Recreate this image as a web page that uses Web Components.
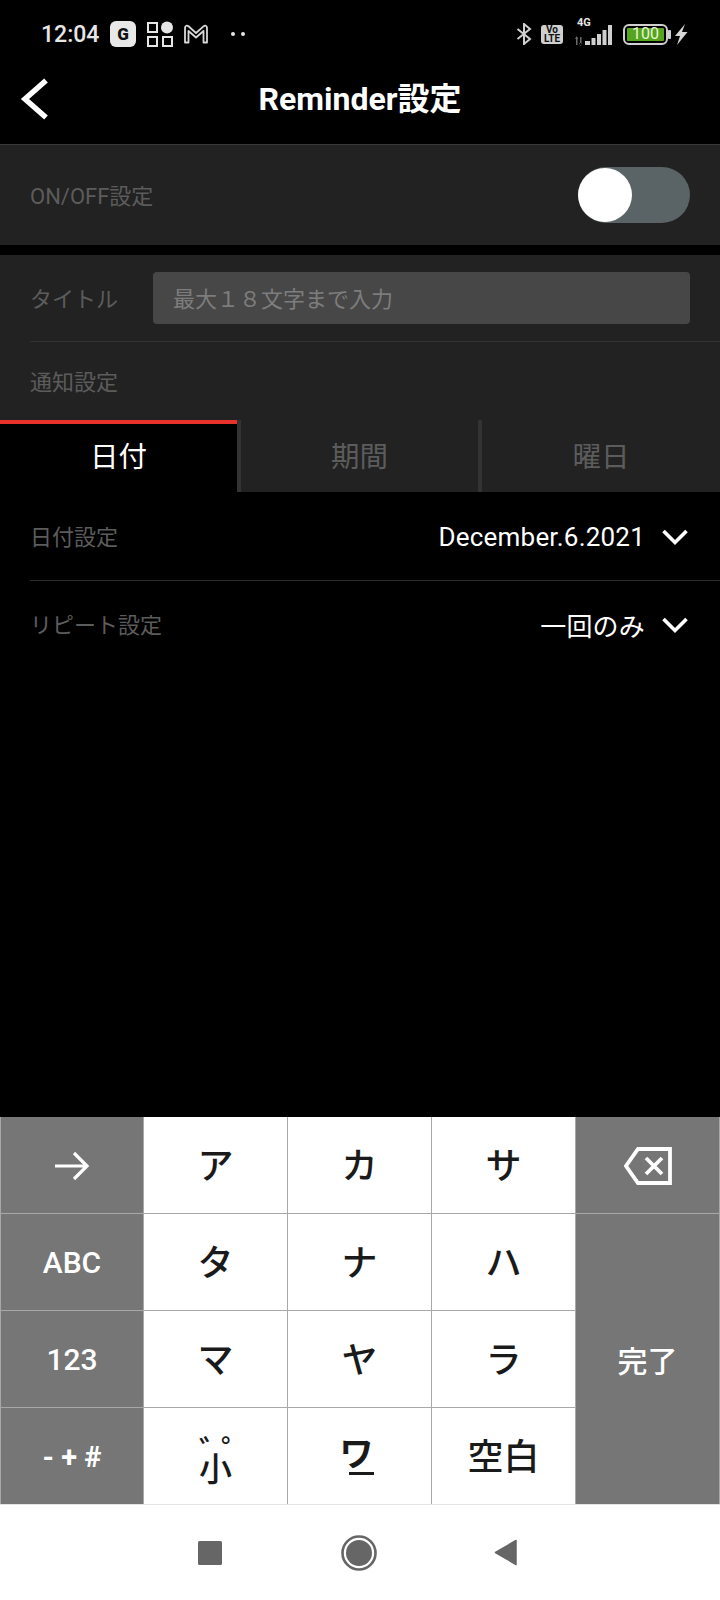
<!DOCTYPE html>
<html>
<head>
<meta charset="utf-8">
<title>Reminder設定</title>
<style>
  html, body { margin: 0; padding: 0; background: #000; }
  body { font-family: Roboto, "Noto Sans CJK JP", sans-serif; }
  reminder-app { height: 1600px; }
</style>
</head>
<body>
<reminder-app></reminder-app>
<script>
(function (document, window) {

  function define(name, css, html) {
    window.customElements.define(name, class extends HTMLElement {
      constructor() {
        super();
        this._root = this.attachShadow({ mode: 'open' });
      }
      connectedCallback() {
        const label = this.getAttribute('label') || '';
        const value = this.getAttribute('value') || '';
        this._root.innerHTML = '<style>' + css + '</style>' +
          html.replace(/\{label\}/g, label).replace(/\{value\}/g, value);
      }
    });
  }

  const chevron = '<svg width="28" height="18" viewBox="0 0 28 18"><path d="M2.5 3L14 14.5 25.500 3" fill="none" stroke="#fff" stroke-width="3.600"/></svg>';

  define('status-bar', `
    :host { display: block; height: 72px; position: relative; color: #e6e6e6; font-family: Roboto, sans-serif; }
    .row { display: flex; align-items: center; height: 68px; padding: 0 32px 0 41px; }
    .time { font-size: 23px; font-weight: 500; width: 69px; }
    .g { width: 26px; height: 26px; background: #e8e8e8; border-radius: 6px; color: #111; font-size: 17px; font-weight: 900; display: flex; align-items: center; justify-content: center; }
    svg { display: block; flex: none; }
    .grow { flex: 1; }
    .volte { width: 22px; height: 19px; margin-left: 9px; background: #cfcfcf; border-radius: 3px; color: #111; font-size: 10px; line-height: 9.500px; font-weight: 700; text-align: center; }
    .volte span { display: block; }
    .net { position: relative; width: 38px; height: 24px; margin-left: 12px; }
    .net b { position: absolute; left: 2px; top: -5px; font-size: 11px; line-height: 11px; font-weight: 700; }
    .batt { position: relative; width: 45px; height: 21px; margin-left: 10px; box-sizing: border-box; border: 2.500px solid #d0d0d0; border-radius: 6px; padding: 2px; }
    .batt div { height: 100%; background: #55a51f; border-radius: 1px; color: #e8f5dc; font-size: 16px; line-height: 12px; text-align: center; }
  `, `
    <div class="row">
      <span class="time">12:04</span>
      <span class="g">G</span>
      <svg style="margin-left:11px" width="26" height="26" viewBox="0 0 26 26" fill="none" stroke="#e6e6e6" stroke-width="2">
        <rect x="1" y="2" width="9" height="9"/><rect x="1" y="16" width="9" height="9"/><rect x="16" y="16" width="9" height="9"/>
        <circle cx="20" cy="6.500" r="6" fill="#e6e6e6" stroke="none"/>
      </svg>
      <svg style="margin-left:10px" width="26" height="22" viewBox="0 0 26 22" fill="none" stroke="#d8d8d8" stroke-width="1.800" stroke-linejoin="round">
        <path d="M2 19.500V5C2 2.500 4 2 5.500 3.300L13 10 20.500 3.300C22 2 24 2.500 24 5V19.500H20.500V8L13 14.500 5.500 8V19.500Z"/>
      </svg>
      <svg style="margin-left:21px" width="16" height="6" viewBox="0 0 16 6" fill="#e6e6e6"><circle cx="3" cy="3" r="2"/><circle cx="13" cy="3" r="2"/></svg>
      <span class="grow"></span>
      <svg width="16" height="22" viewBox="0 0 16 22" fill="none" stroke="#d0d0d0" stroke-width="2"><path d="M1.500 6L14 16 8 21V1L14 6 1.500 16"/></svg>
      <div class="volte"><span>Vo</span><span>LTE</span></div>
      <div class="net">
        <b>4G</b>
        <svg style="position:absolute;left:0;top:3px" width="38" height="21" viewBox="0 0 38 21" fill="#cfcfcf">
          <path d="M1 12h1.500v8H1zM0 14l1.700-3 1.700 3zM5 12h1.500v8H5zM4 18l1.700 3 1.700-3z" fill="#6a6a6a"/>
          <rect x="10" y="16" width="5" height="4"/><rect x="16.500" y="13" width="4" height="7"/><rect x="22" y="9" width="4" height="11"/><rect x="27.500" y="5" width="4" height="15"/><rect x="33" y="0" width="4" height="20"/>
        </svg>
      </div>
      <div class="batt"><div>100</div></div>
      <svg width="4" height="9" viewBox="0 0 4 9" fill="#d0d0d0"><rect width="3" height="9" rx="1"/></svg>
      <svg style="margin-left:2px" width="14" height="21" viewBox="0 0 14 21" fill="#d8d8d8"><path d="M11 0L1 12h5L3 21 13.500 8H8z"/></svg>
    </div>
  `);

  define('app-header', `
    :host { display: flex; align-items: flex-start; justify-content: center; height: 72px; position: relative; color: #fff; font-size: 32px; font-weight: 700; }
    svg { position: absolute; left: 19px; top: 5px; }
    span { margin-top: 7px; line-height: 40px; }
  `, `
    <svg width="30" height="44" viewBox="0 0 30 44"><path d="M27 3.500L6 22 27 40.500" fill="none" stroke="#fff" stroke-width="5.500"/></svg>
    <span><slot></slot></span>
  `);

  define('switch-row', `
    :host { display: flex; align-items: center; justify-content: space-between; height: 101px; box-sizing: border-box; border-top: 1px solid #3a3a3a; padding: 0 30px; background: #222; color: #5c5c5c; font-size: 22px; }
    span { padding-bottom: 2px; }
    .track { position: relative; width: 112px; height: 56px; border-radius: 28px; background: #5a6366; }
    .knob { position: absolute; left: 0; top: 1px; width: 54px; height: 54px; border-radius: 50%; background: #fff; }
  `, `
    <span>{label}</span>
    <div class="track"><div class="knob"></div></div>
  `);

  define('title-row', `
    :host { display: flex; align-items: center; height: 87px; box-sizing: border-box; margin-left: 30px; padding-right: 30px; padding-bottom: 1px; border-bottom: 1px solid #333; color: #5c5c5c; font-size: 22px; }
    .label { width: 123px; padding-bottom: 2px; }
    .input { flex: 1; height: 52px; display: flex; align-items: center; padding: 0 0 2px 20px; box-sizing: border-box; border-radius: 4px; background: #474747; color: #7d7d7d; }
  `, `
    <span class="label">{label}</span>
    <div class="input">{value}</div>
  `);

  define('notice-head', `
    :host { display: flex; align-items: center; height: 78px; padding-left: 30px; padding-bottom: 2px; box-sizing: border-box; color: #5c5c5c; font-size: 22px; }
  `, `<slot></slot>`);

  define('tab-bar', `
    :host { display: flex; height: 72px; background: #222; }
    ::slotted(tab-item) { flex: none; }
  `, `<slot></slot>`);

  define('tab-item', `
    :host { display: flex; align-items: center; justify-content: center; box-sizing: border-box; font-size: 28.500px; color: #5c5c5c; width: 241px; height: 72px; border-right: 4px solid #333; padding-bottom: 3px; }
    :host([active]) { background: #000; color: #fff; box-shadow: inset 0 4px 0 #e8312a; }
    :host([last]) { width: 238px; border-right: 0; }
  `, `<slot></slot>`);

  define('select-row', `
    :host { display: flex; align-items: center; height: 89px; box-sizing: border-box; margin-left: 30px; padding-right: 31px; color: #5c5c5c; font-size: 22px; border-bottom: 1px solid #2c2c2c; }
    :host([plain]) { border-bottom: 0; height: 86px; }
    .label { padding-bottom: 2px; }
    .value { margin-left: auto; color: #fff; font-size: 26px; letter-spacing: .2px; padding-top: 1px; }
    svg { margin: 2px 0 0 16px; display: block; }
  `, `
    <span class="label">{label}</span>
    <span class="value">{value}</span>
    ${chevron}
  `);

  define('ime-key', `
    :host { display: flex; align-items: center; justify-content: center; position: relative; background: #fff; color: #1a1a1a; font-size: 36px; font-weight: 500; font-family: "Noto Sans CJK JP", sans-serif; padding-bottom: 4px; box-sizing: border-box; }
    :host([fn]) { background: #767676; color: #fff; font-size: 30px; font-weight: 500; font-family: Roboto, "Noto Sans CJK JP", sans-serif; padding-bottom: 0; }
  `, `<slot></slot>`);

  define('ime-keyboard', `
    :host { display: grid; grid-template-columns: 142px repeat(4, 143px); grid-template-rows: repeat(4, 96px); gap: 1px; padding: 0 1px; background: #a8a8a8; }
    ::slotted(.tall) { grid-column: 5; grid-row: 2 / span 3; }
  `, `<slot></slot>`);

  define('nav-bar', `
    :host { display: block; height: 96px; box-sizing: border-box; position: relative; background: #fff; border-top: 1px solid #e4e4e4; }
    svg { position: absolute; display: block; }
  `, `
    <svg style="left:198px;top:36px" width="24" height="24" viewBox="0 0 24 24"><rect width="24" height="24" rx="1.500" fill="#666"/></svg>
    <svg style="left:341px;top:30px" width="36" height="36" viewBox="0 0 36 36"><circle cx="18" cy="18" r="16.500" fill="none" stroke="#666" stroke-width="2.600"/><circle cx="18" cy="18" r="13" fill="#666"/></svg>
    <svg style="left:494px;top:34px" width="24" height="27" viewBox="0 0 24 27"><path d="M22 1.500L1.500 13.500 22 25.500Z" fill="#666" stroke="#666" stroke-width="1.500" stroke-linejoin="round"/></svg>
  `);

  define('reminder-app', `
    :host { display: flex; flex-direction: column; background: #000; font-family: Roboto, "Noto Sans CJK JP", sans-serif; }
    .form { margin-top: 10px; background: #222; }
    .spacer { flex: 1; }
    /* marks and 小 stay one text node: first line is ゛゜, squeezed together */
    .mark { display: block; width: 33px; white-space: pre; font-size: 33px; line-height: 17px; margin-top: 10px; }
    .mark::first-line { letter-spacing: -11px; }
    .wa { display: inline-block; line-height: 32px; font-size: 34px; font-weight: 700; position: relative; margin: -5px 6px 0 0; }
    .wa::after { content: ""; position: absolute; left: 9px; right: 0; bottom: -7px; height: 3px; background: #1a1a1a; }
    .sym { font-size: 29px; font-weight: 700; margin-top: 2px; }
    svg { display: block; margin-top: 1px; }
  `, `
    <status-bar></status-bar>
    <app-header>Reminder設定</app-header>
    <switch-row label="ON/OFF設定"></switch-row>
    <div class="form">
      <title-row label="タイトル" value="最大１８文字まで入力"></title-row>
      <notice-head>通知設定</notice-head>
      <tab-bar>
        <tab-item active>日付</tab-item>
        <tab-item>期間</tab-item>
        <tab-item last>曜日</tab-item>
      </tab-bar>
    </div>
    <select-row label="日付設定" value="December.6.2021"></select-row>
    <select-row plain label="リピート設定" value="一回のみ"></select-row>
    <div class="spacer"></div>
    <ime-keyboard>
      <ime-key fn><svg width="36" height="30" viewBox="0 0 36 30"><path d="M1 15H33M20 2L33 15 20 28" fill="none" stroke="#fff" stroke-width="3.200"/></svg></ime-key>
      <ime-key>ア</ime-key>
      <ime-key>カ</ime-key>
      <ime-key>サ</ime-key>
      <ime-key fn><svg width="48" height="38" viewBox="0 0 48 38"><path d="M46 2H14L2 19 14 36H46Z M22 11L38 27M38 11L22 27" fill="none" stroke="#fff" stroke-width="3.800"/></svg></ime-key>
      <ime-key fn>ABC</ime-key>
      <ime-key>タ</ime-key>
      <ime-key>ナ</ime-key>
      <ime-key>ハ</ime-key>
      <ime-key fn class="tall">完了</ime-key>
      <ime-key fn>123</ime-key>
      <ime-key>マ</ime-key>
      <ime-key>ヤ</ime-key>
      <ime-key>ラ</ime-key>
      <ime-key fn><span class="sym">- + #</span></ime-key>
      <ime-key><span class="mark">゛゜
小</span></ime-key>
      <ime-key><span class="wa">ワ</span></ime-key>
      <ime-key>空白</ime-key>
    </ime-keyboard>
    <nav-bar></nav-bar>
  `);

})(document, window);
</script>
</body>
</html>
